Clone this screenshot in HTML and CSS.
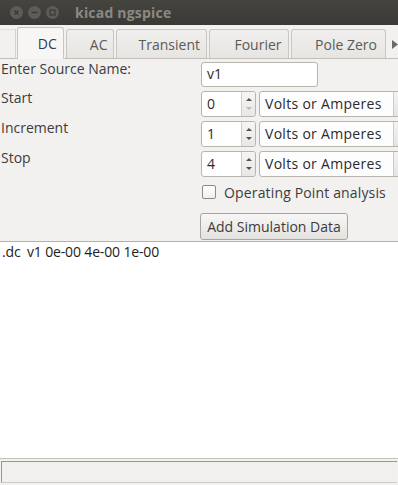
FILE: index.html
```html
<!DOCTYPE html>
<html lang="en">
<head>
    <meta charset="UTF-8">
    <meta name="viewport" content="width=device-width, initial-scale=1.0">
    <title>kicad ngspice</title>
    <link rel="stylesheet" href="styles.css">
</head>
<body>
    <div class="window">
        <div class="titlebar">
            <div class="wm-buttons">
                <span class="wm-btn">
                    <svg width="13" height="13" viewBox="0 0 13 13"><path d="M4.5 4.5 L8.5 8.5 M8.5 4.5 L4.5 8.5" stroke="#3a3935" stroke-width="1.4"/></svg>
                </span>
                <span class="wm-btn">
                    <svg width="13" height="13" viewBox="0 0 13 13"><path d="M3.5 6.5 H9.5" stroke="#3a3935" stroke-width="1.4"/></svg>
                </span>
                <span class="wm-btn">
                    <svg width="13" height="13" viewBox="0 0 13 13"><rect x="4" y="4" width="5" height="5" fill="none" stroke="#3a3935" stroke-width="1.2"/></svg>
                </span>
            </div>
            <span class="title">kicad ngspice</span>
        </div>

        <div class="tabbar">
            <div class="tab-stub"></div>
            <div class="tab active">DC</div>
            <div class="tab tab-ac">AC</div>
            <div class="tab tab-transient">Transient</div>
            <div class="tab tab-fourier">Fourier</div>
            <div class="tab tab-pz">Pole Zero</div>
            <div class="tab-arrow">
                <svg width="6" height="9" viewBox="0 0 6 9"><path d="M0 0 L6 4.5 L0 9 Z" fill="#6b6a66"/></svg>
            </div>
        </div>

        <div class="pane">
            <div class="form">
                <label class="lbl">Enter Source Name:</label>
                <div class="ctrl"><div class="entry name-entry">v1</div></div>

                <label class="lbl">Start</label>
                <div class="ctrl">
                    <div class="spin">
                        <span class="spin-val">0</span>
                        <span class="spin-btns">
                            <span class="arr up"></span>
                            <span class="arr down off"></span>
                        </span>
                    </div>
                    <div class="combo"><span class="combo-text">Volts or Amperes</span><span class="combo-btn"></span></div>
                </div>

                <label class="lbl">Increment</label>
                <div class="ctrl">
                    <div class="spin">
                        <span class="spin-val">1</span>
                        <span class="spin-btns">
                            <span class="arr up"></span>
                            <span class="arr down"></span>
                        </span>
                    </div>
                    <div class="combo"><span class="combo-text">Volts or Amperes</span><span class="combo-btn"></span></div>
                </div>

                <label class="lbl">Stop</label>
                <div class="ctrl">
                    <div class="spin">
                        <span class="spin-val">4</span>
                        <span class="spin-btns">
                            <span class="arr up"></span>
                            <span class="arr down"></span>
                        </span>
                    </div>
                    <div class="combo"><span class="combo-text">Volts or Amperes</span><span class="combo-btn"></span></div>
                </div>

                <span></span>
                <div class="ctrl check-row">
                    <span class="checkbox"></span>
                    <span class="check-label">Operating Point analysis</span>
                </div>

                <span></span>
                <div class="ctrl btn-row">
                    <button class="btn">Add Simulation Data</button>
                </div>
            </div>
        </div>

        <div class="output">.dc <span class="gap">v1</span> 0e-00 4e-00 1e-00</div>

        <div class="statusbar">
            <div class="status-field"></div>
        </div>
    </div>
</body>
</html>
```

FILE: styles.css
```css
body {
    margin: 0;
    font-family: "Open Sans", "DejaVu Sans", sans-serif;
    font-size: 14px;
    color: #3c3c3c;
    background-color: #f2f1f0;
}
.window {
    width: 398px;
    height: 485px;
    display: flex;
    flex-direction: column;
    overflow: hidden;
}
.titlebar {
    height: 25px;
    flex: none;
    background: linear-gradient(#45443f, #3a3935);
    display: flex;
    align-items: center;
}
.wm-buttons {
    display: flex;
    gap: 5px;
    margin-left: 10px;
}
.wm-btn {
    width: 13px;
    height: 13px;
    border-radius: 50%;
    background-color: #5d5c58;
    display: flex;
}
.title {
    margin-left: 16px;
    font-weight: bold;
    font-size: 14px;
    color: #8c8983;
    letter-spacing: 0.2px;
}
.tabbar {
    height: 33px;
    flex: none;
    display: flex;
    align-items: flex-end;
    border-bottom: 1px solid #c3bfb9;
}
.tab-stub {
    width: 16px;
    height: 30px;
    border-right: 1px solid #d4d1cc;
    border-top: 1px solid #e2dfdb;
    box-sizing: border-box;
    margin-bottom: -1px;
}
.tab {
    height: 29px;
    box-sizing: border-box;
    border: 1px solid #c9c5bf;
    border-bottom: none;
    border-radius: 3px 3px 0 0;
    background: linear-gradient(#f0efed, #e7e5e2);
    color: #5b5a57;
    display: flex;
    align-items: center;
    justify-content: flex-end;
    padding-right: 6px;
    margin-left: 2px;
}
.tab.active {
    height: 32px;
    margin-left: 1px;
    margin-bottom: -1px;
    background: #f7f6f5;
    color: #2e3d55;
    width: 47px;
    justify-content: center;
    padding: 0 0 0 14px;
}
.tab-ac { width: 49px; }
.tab-transient { width: 91px; }
.tab-fourier { width: 80px; }
.tab-pz { width: 96px; padding-right: 8px; }
.tab-arrow {
    margin-left: 6px;
    align-self: center;
    display: flex;
    margin-top: 6px;
}
.pane {
    height: 183px;
    flex: none;
    border-bottom: 1px solid #b5b1ab;
    box-sizing: border-box;
    padding-top: 3px;
}
.form {
    display: grid;
    grid-template-columns: 201px 1fr;
    grid-template-rows: 25px 26px 26px 26px 22px 26px;
    row-gap: 4px;
}
.lbl {
    padding-left: 1px;
    line-height: 14px;
}
.ctrl {
    display: flex;
    gap: 3px;
}
.entry {
    width: 117px;
    height: 25px;
    box-sizing: border-box;
    background-color: #fff;
    border: 1px solid #b8b4ae;
    border-radius: 3px;
    padding-left: 5px;
    line-height: 22px;
    color: #2b2b2b;
}
.spin {
    width: 55px;
    height: 26px;
    box-sizing: border-box;
    background-color: #fff;
    border: 1px solid #b8b4ae;
    border-radius: 3px;
    display: flex;
}
.spin-val {
    flex: 1;
    padding-left: 5px;
    line-height: 24px;
    color: #2b2b2b;
}
.spin-btns {
    width: 14px;
    border-left: 1px solid #d3d0cb;
    background: linear-gradient(#f6f5f4, #e9e7e4);
    border-radius: 0 3px 3px 0;
    display: flex;
    flex-direction: column;
    align-items: center;
    justify-content: space-around;
    padding: 3px 0;
    box-sizing: border-box;
}
.arr {
    width: 0;
    height: 0;
    border-left: 3px solid transparent;
    border-right: 3px solid transparent;
}
.arr.up {
    border-bottom: 3px solid #55534f;
}
.arr.down {
    border-top: 3px solid #55534f;
}
.arr.down.off {
    border-top-color: #bcb9b4;
}
.combo {
    width: 160px;
    height: 26px;
    box-sizing: border-box;
    background-color: #fdfdfd;
    border: 1px solid #b8b4ae;
    border-radius: 3px;
    display: flex;
    flex: none;
}
.combo-text {
    width: 128px;
    padding-left: 5px;
    line-height: 24px;
    color: #2b2b2b;
    white-space: nowrap;
    letter-spacing: 0.3px;
}
.combo-btn {
    flex: 1;
    border-left: 1px solid #cfccc7;
    background: linear-gradient(#f4f3f2, #e6e4e1);
}
.check-row {
    align-items: center;
    gap: 8px;
    padding-left: 1px;
}
.checkbox {
    width: 14px;
    height: 14px;
    box-sizing: border-box;
    border: 1px solid #8f8b84;
    border-radius: 2px;
    background: linear-gradient(#fff, #f1f0ee);
}
.check-label {
    color: #3c3c3c;
    letter-spacing: 0.15px;
}
.btn-row {
    margin-top: 6px;
}
.btn {
    height: 27px;
    width: 148px;
    margin-left: -1px;
    font-family: "Open Sans", "DejaVu Sans", sans-serif;
    font-size: 14px;
    color: #3c3c3c;
    background: linear-gradient(#f8f7f6, #e4e2df);
    border: 1px solid #a9a59e;
    border-radius: 3px;
    padding: 0;
}
.output {
    flex: 1;
    background-color: #fff;
    padding: 1px 2px;
    line-height: 18px;
    color: #222;
    letter-spacing: -0.15px;
}
.gap {
    margin-left: 3px;
}
.statusbar {
    height: 27px;
    flex: none;
    border-top: 1px solid #c3bfb9;
    box-sizing: border-box;
    padding: 2px 1px 2px 1px;
}
.status-field {
    height: 22px;
    box-sizing: border-box;
    border-top: 1px solid #9a968f;
    border-left: 1px solid #9a968f;
    border-bottom: 1px solid #cfccc7;
    background-color: #f1f0ee;
}
```
